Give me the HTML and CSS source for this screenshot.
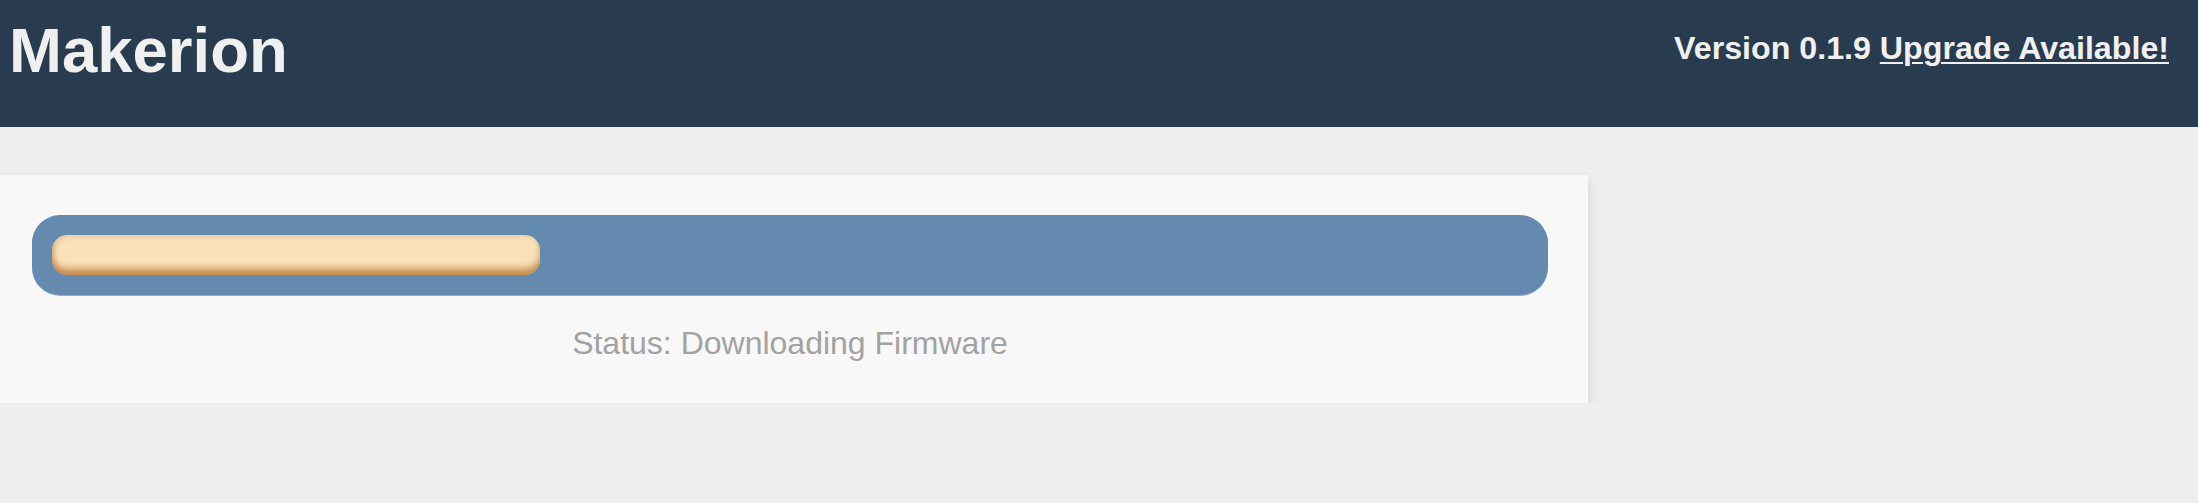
FILE: index.html
```html
<!DOCTYPE html>
<html>
<head>
<meta charset="utf-8">
<title>Makerion</title>
<link rel="stylesheet" href="styles.css">
</head>
<body>
<header class="topbar">
  <h1 class="brand">Makerion</h1>
  <div class="version">Version 0.1.9 <a class="upgrade" href="#">Upgrade Available!</a></div>
</header>
<main class="content">
  <section class="card">
    <div class="progress">
      <div class="progress-fill" style="width: 33.06%"></div>
    </div>
    <p class="status">Status: Downloading Firmware</p>
  </section>
</main>
</body>
</html>
```

FILE: styles.css
```css
html, body {
  margin: 0;
  padding: 0;
}
body {
  background: #eeeeee;
  font-family: "Liberation Sans", Arial, Helvetica, sans-serif;
  overflow: hidden;
}
.topbar {
  height: 127px;
  background: #293b4f;
  display: flex;
  justify-content: space-between;
  align-items: flex-start;
  padding: 0 29px 0 9px;
  box-sizing: border-box;
}
.brand {
  margin: 14px 0 0 0;
  font-size: 63.5px;
  line-height: 72px;
  font-weight: bold;
  color: #f0f0f0;
}
.version {
  margin-top: 30px;
  font-size: 32.2px;
  line-height: 36px;
  font-weight: bold;
  color: #f0f0f0;
}
.upgrade {
  color: #f0f0f0;
  text-decoration: underline;
  text-decoration-thickness: 2px;
  text-underline-offset: 3px;
}
.content {
  padding-top: 48px;
}
.card {
  margin-left: -8px;
  width: 1596px;
  box-sizing: border-box;
  padding: 40px;
  background: #f8f8f8;
  box-shadow: 0 6px 10px rgba(0, 0, 0, 0.12);
}
.progress {
  height: 80px;
  box-sizing: border-box;
  padding: 20px;
  background: #648aaf;
  border-radius: 28px;
  box-shadow: 0 1px 0 #90abc8;
}
.progress-fill {
  height: 40px;
  border-radius: 15px;
  background: #f9e1b9;
  box-shadow: inset 0 -7px 7px -1px rgba(178, 108, 38, 0.75), inset 3px 2px 5px rgba(160, 110, 60, 0.18);
}
.status {
  margin: 28px 0 0 0;
  text-align: center;
  font-size: 32px;
  line-height: 40px;
  color: #a2a2a2;
}
```
